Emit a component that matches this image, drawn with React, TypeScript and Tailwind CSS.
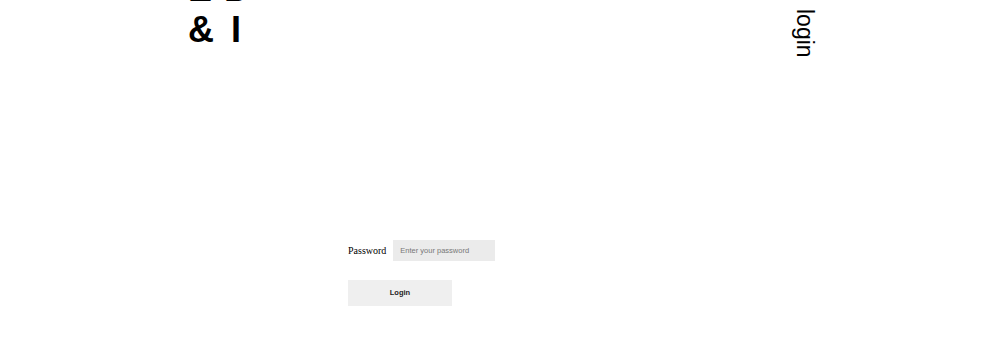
export default function App() {
  return (
    <div className="min-h-[344px] w-[1000px] bg-white overflow-hidden">
      <header className="flex justify-between items-start pl-[188px] pr-[184px]">
        <h1 className="mt-[-32px] text-[36px] leading-[41px] font-bold text-black font-['Liberation_Sans',Arial,sans-serif]">
          E <span className="ml-[2px]">D</span>
          <br />
          &amp; <span className="ml-[7px]">I</span>
        </h1>
        <a
          href="#"
          className="mt-[9px] text-[23px] leading-[23px] text-black [writing-mode:vertical-rl] font-['Liberation_Sans',Arial,sans-serif]"
        >
          login
        </a>
      </header>

      <form className="mt-[182px] pl-[348px] flex flex-col items-start" onSubmit={(e) => e.preventDefault()}>
        <div className="flex items-center gap-[7px]">
          <label className="text-[10px] text-black font-['Liberation_Serif','Times_New_Roman',serif]">
            Password
          </label>
          <input
            type="password"
            placeholder="Enter your password"
            className="w-[102px] h-[21px] px-[7px] bg-[#ebebeb] text-[7.5px] text-gray-700 placeholder:text-[#777] outline-none font-['Liberation_Sans',Arial,sans-serif]"
          />
        </div>
        <button
          type="submit"
          className="mt-[19px] w-[104px] h-[26px] bg-[#efefef] text-[7.5px] font-bold text-[#222] font-['Liberation_Sans',Arial,sans-serif]"
        >
          Login
        </button>
      </form>
    </div>
  )
}
